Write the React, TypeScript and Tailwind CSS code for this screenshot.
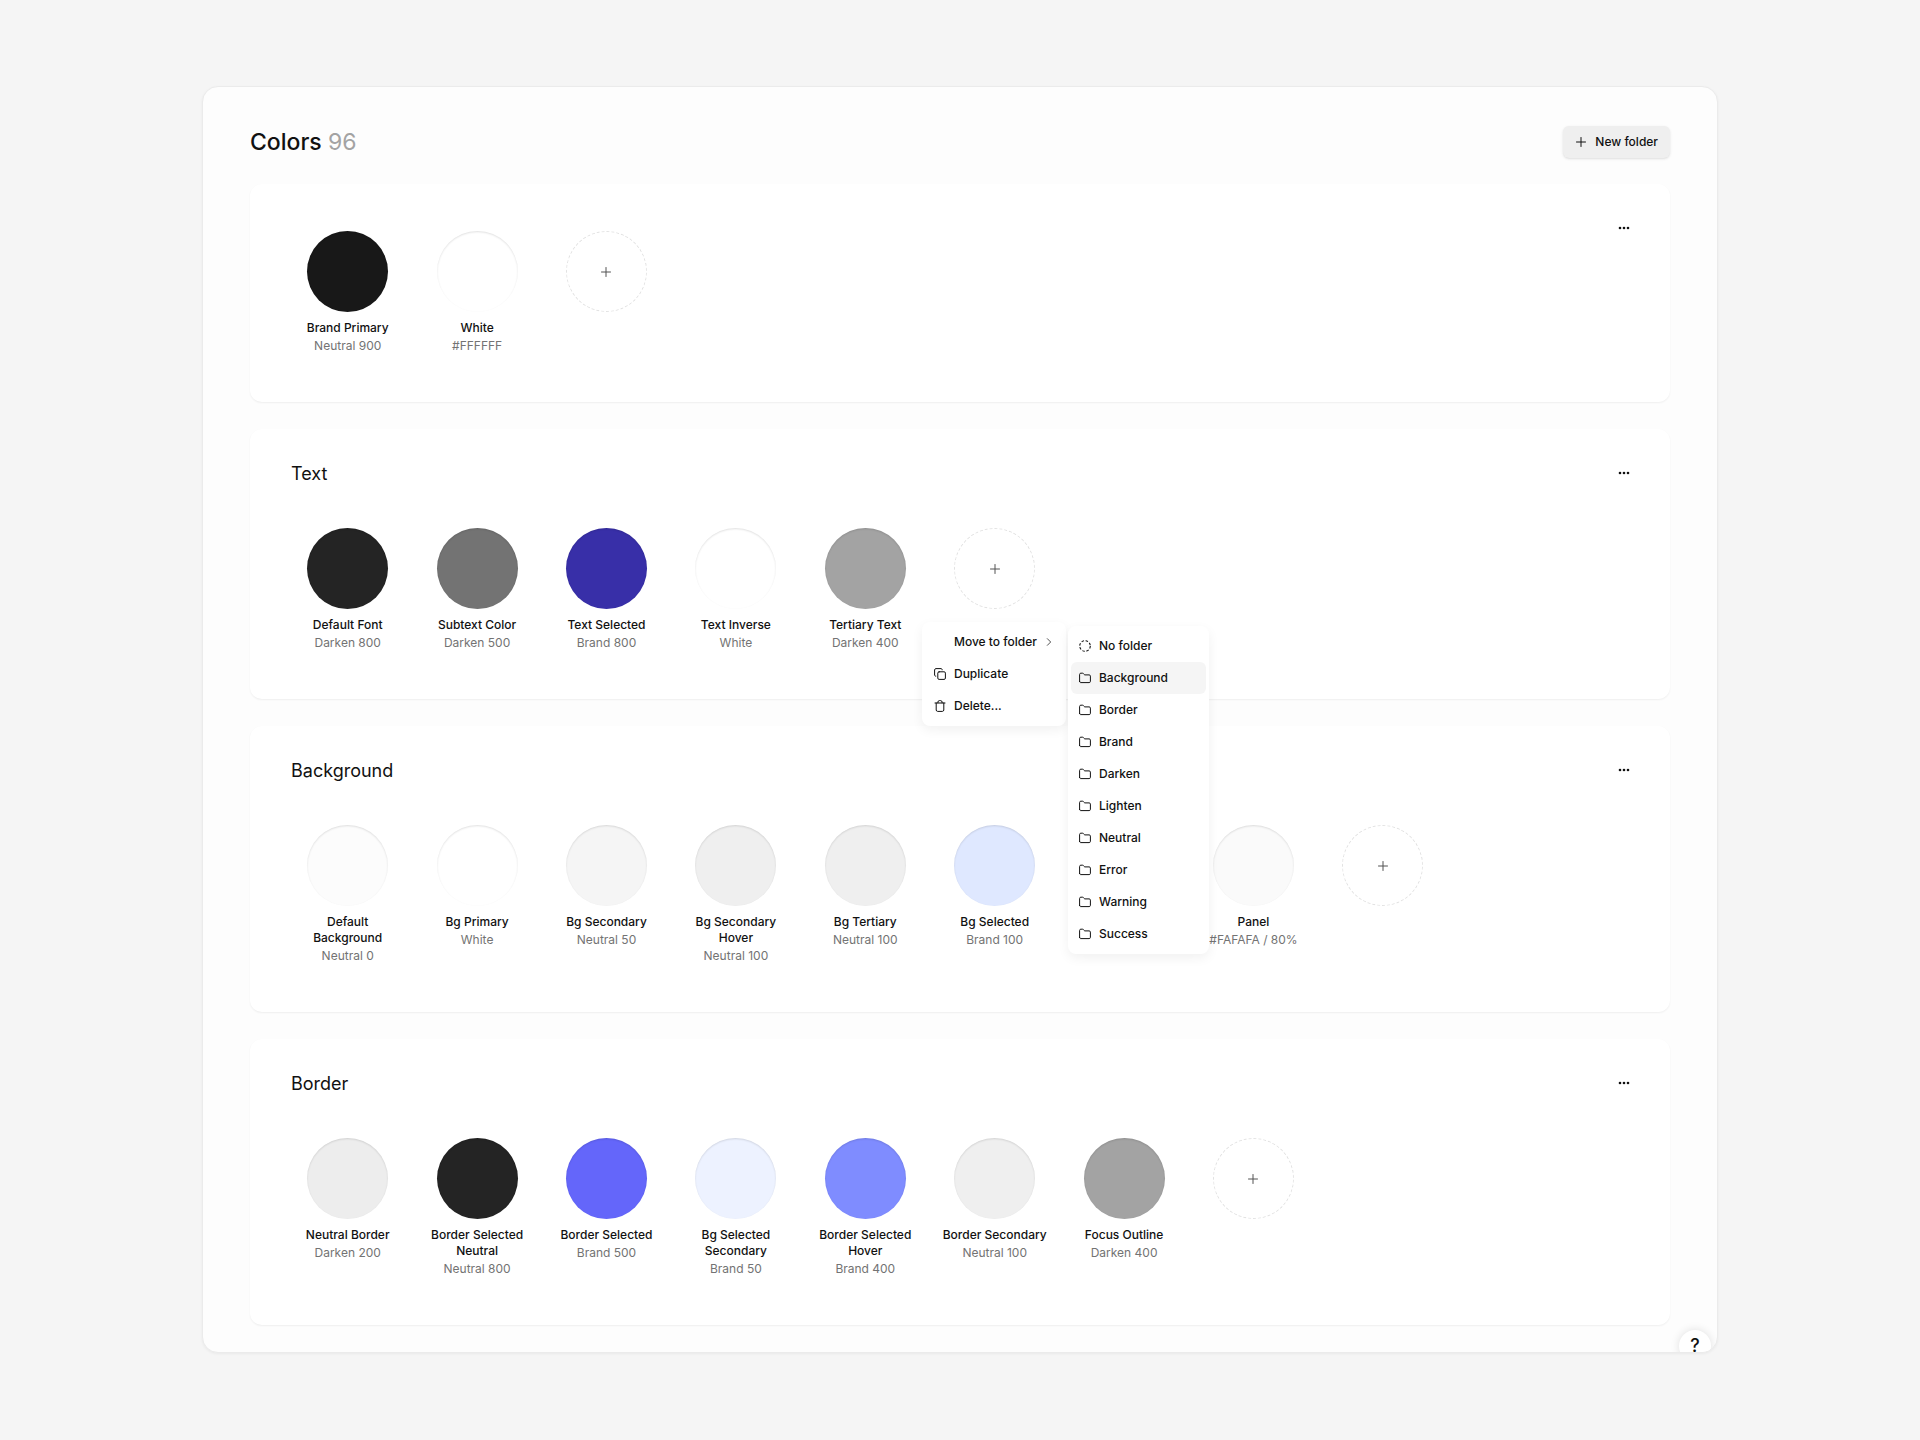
import React from 'react';

type Swatch = {
  name: string;
  value: string;
  color: string;
  menu?: boolean;
  className?: string;
};

type Folder = {
  title?: string;
  swatches: Swatch[];
};

const folders: Folder[] = [
  {
    swatches: [
      { name: 'Brand Primary', value: 'Neutral 900', color: 'bg-[#181818]' },
      { name: 'White', value: '#FFFFFF', color: 'bg-white' },
    ],
  },
  {
    title: 'Text',
    swatches: [
      { name: 'Default Font', value: 'Darken 800', color: 'bg-[#242424]' },
      { name: 'Subtext Color', value: 'Darken 500', color: 'bg-[#737373]' },
      { name: 'Text Selected', value: 'Brand 800', color: 'bg-[#382fa8]' },
      { name: 'Text Inverse', value: 'White', color: 'bg-white' },
      { name: 'Tertiary Text', value: 'Darken 400', color: 'bg-[#a3a3a3]', menu: true },
    ],
  },
  {
    title: 'Background',
    swatches: [
      { name: 'Default Background', value: 'Neutral 0', color: 'bg-[#fcfcfc]' },
      { name: 'Bg Primary', value: 'White', color: 'bg-white' },
      { name: 'Bg Secondary', value: 'Neutral 50', color: 'bg-[#f5f5f5]' },
      { name: 'Bg Secondary Hover', value: 'Neutral 100', color: 'bg-[#efefef]' },
      { name: 'Bg Tertiary', value: 'Neutral 100', color: 'bg-[#efefef]' },
      { name: 'Bg Selected', value: 'Brand 100', color: 'bg-[#dfe8ff]' },
      { name: 'Panel', value: '#FAFAFA / 80%', color: 'bg-[#fafafa]', className: 'col-start-8' },
    ],
  },
  {
    title: 'Border',
    swatches: [
      { name: 'Neutral Border', value: 'Darken 200', color: 'bg-[#ededed]' },
      { name: 'Border Selected Neutral', value: 'Neutral 800', color: 'bg-[#242424]' },
      { name: 'Border Selected', value: 'Brand 500', color: 'bg-[#6466fa]' },
      { name: 'Bg Selected Secondary', value: 'Brand 50', color: 'bg-[#edf2ff]' },
      { name: 'Border Selected Hover', value: 'Brand 400', color: 'bg-[#7f8cff]' },
      { name: 'Border Secondary', value: 'Neutral 100', color: 'bg-[#efefef]' },
      { name: 'Focus Outline', value: 'Darken 400', color: 'bg-[#a3a3a3]' },
    ],
  },
];

const targets = ['Background', 'Border', 'Brand', 'Darken', 'Lighten', 'Neutral', 'Error', 'Warning', 'Success'];

const Icon: React.FC<{ children: React.ReactNode; className?: string }> = ({ children, className = 'size-3' }) => (
  <svg
    viewBox="0 0 12 12"
    fill="none"
    stroke="currentColor"
    strokeLinecap="round"
    strokeLinejoin="round"
    className={`shrink-0 ${className}`}
    aria-hidden="true"
  >
    {children}
  </svg>
);

const PlusIcon = ({ className }: { className?: string }) => (
  <Icon className={className}>
    <path d="M6 1.5v9M1.5 6h9" />
  </Icon>
);

const FolderIcon = () => (
  <Icon>
    <path d="M.6 9.4V2.4c0-.7.5-1.2 1.2-1.2h1.9c.4 0 .7.2.9.5l.5.7c.2.3.5.5.9.5h4.2c.7 0 1.2.5 1.2 1.2v5.3c0 .7-.5 1.2-1.2 1.2H1.8C1.1 10.6.6 10.1.6 9.4Z" />
  </Icon>
);

const MenuItem: React.FC<{ label: string; icon?: React.ReactNode; active?: boolean; arrow?: boolean }> = ({
  label,
  icon,
  active,
  arrow,
}) => (
  <button
    role="menuitem"
    className={`flex h-8 w-full items-center gap-2 rounded-md px-2 text-left text-xs leading-4 font-medium whitespace-nowrap text-[#111111] ${
      active ? 'bg-[#f5f5f5]' : ''
    }`}
  >
    <span className="flex size-3 shrink-0 items-center">{icon}</span>
    <span className="flex-1">{label}</span>
    {arrow && (
      <Icon className="mr-1 size-2 text-[#525252]">
        <path d="M3.5 1l5 5-5 5" strokeWidth="1.5" />
      </Icon>
    )}
  </button>
);

const ContextMenu = () => (
  <div className="absolute top-[94px] left-full z-10 -ml-2 w-36">
    <div role="menu" className="rounded-lg bg-white p-1 shadow-[0_4px_12px_rgba(0,0,0,0.06)]">
      <MenuItem label="Move to folder" arrow />
      <MenuItem
        label="Duplicate"
        icon={
          <Icon>
            <rect x="3.8" y="3.8" width="7.6" height="7.6" rx="1.3" />
            <path d="M1.8 8.2C1.1 8.2.6 7.7.6 7V1.9C.6 1.2 1.2.6 1.9.6H7c.7 0 1.2.5 1.2 1.2" />
          </Icon>
        }
      />
      <MenuItem
        label="Delete..."
        icon={
          <Icon>
            <path d="M1 3h10M2.2 3v7c0 .8.6 1.4 1.4 1.4h4.8c.8 0 1.4-.6 1.4-1.4V3M3.9 2.8V2c0-.8.6-1.4 1.4-1.4h1.4c.8 0 1.4.6 1.4 1.4v.8" />
          </Icon>
        }
      />
    </div>
    <div
      role="menu"
      className="absolute top-1 left-full ml-0.5 w-[141px] rounded-lg bg-white px-[3px] py-1 shadow-[0_4px_12px_rgba(0,0,0,0.06)]"
    >
      <MenuItem
        label="No folder"
        icon={
          <Icon>
            <circle cx="6" cy="6" r="5.3" strokeLinecap="butt" strokeWidth="1.1" strokeDasharray="2.5 1.66" />
          </Icon>
        }
      />
      {targets.map((t) => (
        <MenuItem key={t} label={t} icon={<FolderIcon />} active={t === 'Background'} />
      ))}
    </div>
  </div>
);

const SwatchItem: React.FC<{ swatch: Swatch }> = ({ swatch }) => (
  <li className={`relative flex flex-col items-center text-center text-xs leading-4 ${swatch.className ?? ''}`}>
    <button
      aria-label={swatch.name}
      className={`size-[81px] rounded-full shadow-[inset_0_1px_2px_rgba(0,0,0,0.12)] ${swatch.color}`}
    />
    <p className="mt-2 max-w-28 font-medium text-[#111111]">{swatch.name}</p>
    <p className="mt-0.5 whitespace-nowrap text-[#737373]">{swatch.value}</p>
    {swatch.menu && <ContextMenu />}
  </li>
);

const FolderCard: React.FC<{ folder: Folder }> = ({ folder }) => (
  <section className="relative rounded-xl bg-white px-[33px] pt-[47px] pb-12 shadow-[0_1px_2px_rgba(0,0,0,0.06)]">
    {folder.title && <h2 className="mb-10 -mt-4 pl-2 text-lg leading-7 text-[#111111]">{folder.title}</h2>}
    <button
      aria-label="Folder options"
      className="absolute top-8 right-8 flex h-6 w-7 items-center justify-center text-[#111111]"
    >
      <svg viewBox="0 0 12 4" className="h-1 w-3" fill="currentColor" aria-hidden="true">
        <circle cx="2" cy="2" r="1.3" />
        <circle cx="6" cy="2" r="1.3" />
        <circle cx="10" cy="2" r="1.3" />
      </svg>
    </button>
    <ul className="grid max-w-[1294px] grid-cols-10">
      {folder.swatches.map((s) => (
        <SwatchItem key={s.name} swatch={s} />
      ))}
      <li className="flex items-start justify-center">
        <button
          aria-label="Add color"
          className="flex size-[81px] items-center justify-center rounded-full border border-dashed border-[#e2e2e2] text-[#525252]"
        >
          <PlusIcon />
        </button>
      </li>
    </ul>
  </section>
);

const App = () => (
  <div className="min-h-screen bg-[#f5f5f5] px-[202px] py-[86px] font-['Inter',sans-serif]">
    <main className="relative overflow-hidden rounded-2xl border border-[#ebebeb] bg-[#fdfdfd] px-[47px] pt-[39px] pb-[27px] shadow-[0_1px_3px_rgba(0,0,0,0.05)]">
      <header className="mb-[26px] flex items-center justify-between">
        <h1 className="text-[23px] leading-8 font-medium text-[#111111]">
          Colors <span className="font-normal text-[#a3a3a3]">96</span>
        </h1>
        <button className="flex h-8 items-center gap-2 rounded-md bg-[#efefef] px-3 text-xs leading-4 font-medium text-[#111111] shadow-sm">
          <PlusIcon />
          New folder
        </button>
      </header>
      <div className="flex flex-col gap-[27px]">
        {folders.map((f, i) => (
          <FolderCard key={i} folder={f} />
        ))}
      </div>
      <button
        aria-label="Help"
        className="absolute right-1.5 -bottom-2.5 flex size-8 items-center justify-center rounded-full bg-white text-lg font-medium text-[#111111] shadow-[0_0_10px_rgba(0,0,0,0.12)]"
      >
        ?
      </button>
    </main>
  </div>
);

export default App;
